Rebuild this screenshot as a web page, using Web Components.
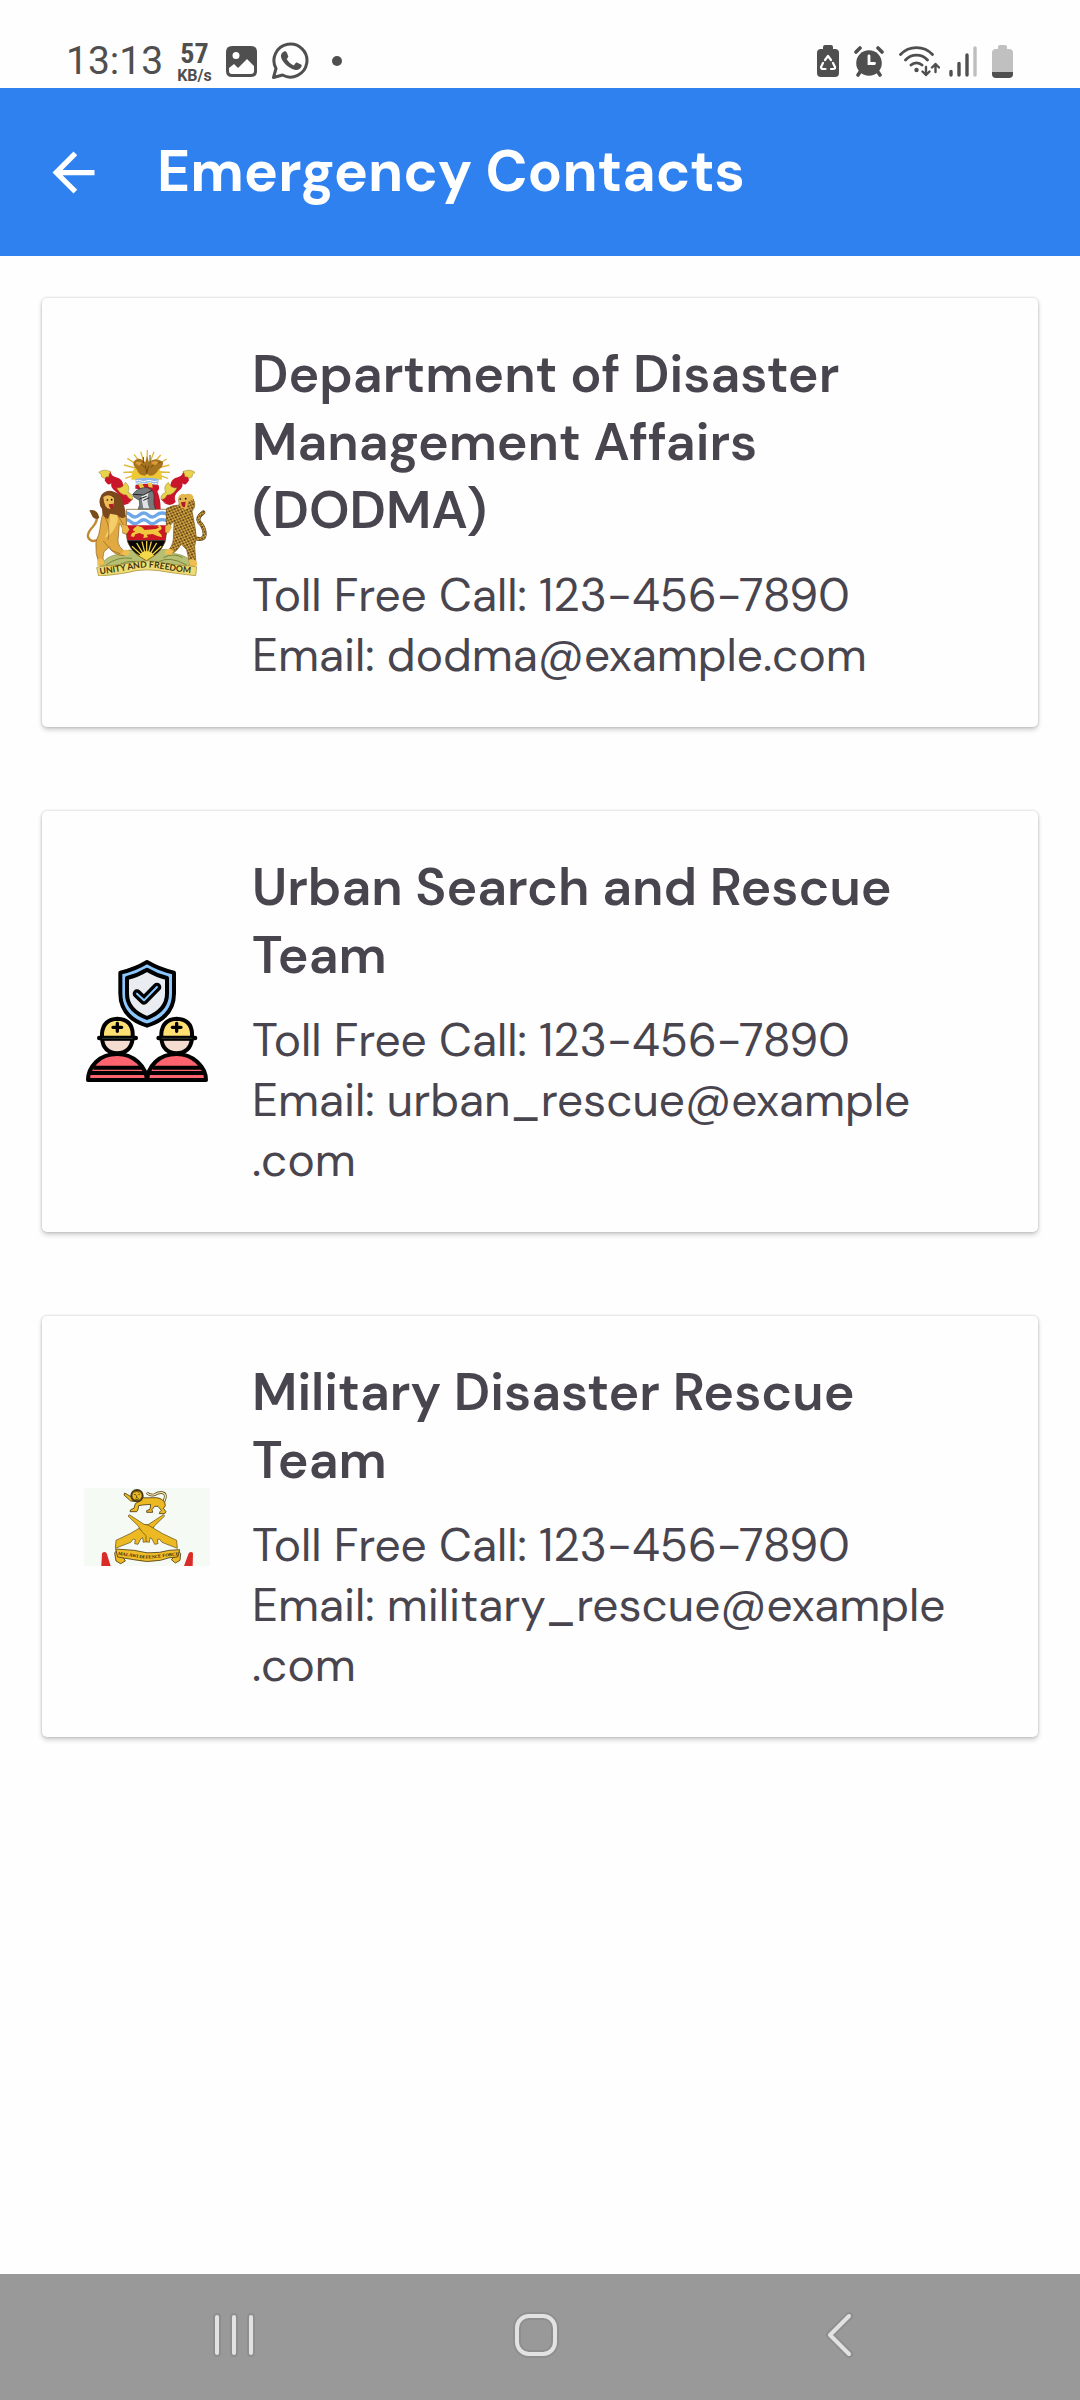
<!DOCTYPE html>
<html lang="en">
<head>
<meta charset="utf-8">
<meta name="viewport" content="width=device-width, initial-scale=1">
<title>Emergency Contacts</title>
<style>
  body {
    margin: 0;
    background: #fefefe;
    color: #49454f;
    font-family: "DM Sans", Inter, "Open Sans", sans-serif;
  }
</style>
</head>
<body>

<contacts-screen>
  <status-bar slot="status" time="13:13" rate="57" unit="KB/s"></status-bar>
  <app-header slot="header">Emergency Contacts</app-header>

  <contact-card>
    <coat-of-arms slot="emblem"></coat-of-arms>
    <span slot="name">Department of Disaster Management Affairs (DODMA)</span>
    <span slot="phone">Toll Free Call: 123-456-7890</span>
    <span slot="email">Email: dodma@example.com</span>
  </contact-card>

  <contact-card>
    <rescue-team slot="emblem"></rescue-team>
    <span slot="name">Urban Search and Rescue Team</span>
    <span slot="phone">Toll Free Call: 123-456-7890</span>
    <span slot="email">Email: urban_rescue@example<wbr>.com</span>
  </contact-card>

  <contact-card>
    <defence-badge slot="emblem"></defence-badge>
    <span slot="name">Military Disaster Rescue Team</span>
    <span slot="phone">Toll Free Call: 123-456-7890</span>
    <span slot="email">Email: military_rescue@example<wbr>.com</span>
  </contact-card>

  <system-nav slot="nav"></system-nav>
</contacts-screen>

<template id="contacts-screen">
  <style>
    :host { display: flex; flex-direction: column; min-height: 100vh; }
    main { flex: 1; display: flex; flex-direction: column; gap: 84px; padding: 42px; }
  </style>
  <slot name="status"></slot>
  <slot name="header"></slot>
  <main><slot></slot></main>
  <slot name="nav"></slot>
</template>

<template id="status-bar">
  <style>
    :host {
      display: flex; justify-content: space-between; align-items: center;
      height: 54px; padding: 34px 67px 0 66px; color: #4f4f4f;
      font-family: Roboto, sans-serif;
    }
    .group { display: flex; align-items: center; }
    .left { gap: 14px; }
    .right { gap: 15px; }
    svg { display: block; }
    .signal { margin-left: -6px; }
    .time { font-size: 39px; line-height: 54px; }
    .net { display: flex; flex-direction: column; align-items: center; padding-top: 2px; font-weight: 700; }
    .rate { font: 700 28px/28px "Liberation Sans Narrow", "Roboto Condensed", sans-serif; }
    .unit { font-size: 16px; line-height: 16px; }
    .dot { width: 10px; height: 10px; border-radius: 50%; background: currentColor; margin-left: 9px; }
  </style>
  <div class="group left">
    <span class="time"></span>
    <span class="net"><span class="rate"></span><span class="unit"></span></span>
    <svg width="31" height="31" viewBox="0 0 31 31"><path fill="currentColor" fill-rule="evenodd" d="M6 0h19q6 0 6 6v19q0 6-6 6H6q-6 0-6-6V6q0-6 6-6zM10 6a3.500 3.500 0 1 0 0 7a3.500 3.500 0 0 0 0-7zM3 22v3q0 3 3 3h19q3 0 3-3v-5l-7-7l-9 9l-4-4z"/></svg>
    <svg width="38" height="38" viewBox="0 0 38 38"><path fill="none" stroke="currentColor" stroke-width="3" stroke-linejoin="round" d="M2.500 35.500L5 26.500A16.500 16.500 0 1 1 11.500 33z"/><path fill="currentColor" d="M13 9.500c1-.6 2-.4 2.500.6l1.700 4c.3.8-.2 1.500-1.500 3c1.600 3 4 5 7 6.300l2-2.300c.5-.6 1-.6 1.700-.3l3.600 1.800c.8.4.8 1.200.4 2.200c-1 2.400-3.400 3.500-6 3.100c-6-1-13-7-14.400-12.800c-.5-2.300.8-4.600 3-5.600z"/></svg>
    <span class="dot"></span>
  </div>
  <div class="group right">
    <svg width="22" height="33" viewBox="0 0 22 33"><path fill="currentColor" d="M6 4V2q0-2 2-2h6q2 0 2 2v2h2q4 0 4 4v20q0 4-4 4H4q-4 0-4-4V8q0-4 4-4z"/><g fill="none" stroke="#fff" stroke-width="2.200" stroke-linecap="round" stroke-linejoin="round"><path d="M8 15l3-4 3 4M16 18l2 4q.5 2-2 2h-2M8.500 24H6q-2 0-2-2l2-4"/></g></svg>
    <svg width="30" height="31" viewBox="0 0 30 31"><circle cx="15" cy="17" r="12.800" fill="currentColor"/><path fill="none" stroke="currentColor" stroke-width="3.600" stroke-linecap="round" d="M2 6l4-4M28 6l-4-4M6 26l-2 3M24 26l2 3"/><path fill="none" stroke="#fff" stroke-width="2.800" stroke-linecap="round" d="M15 10v7.500h5.500"/></svg>
    <svg width="41" height="32" viewBox="0 0 41 32"><g fill="none" stroke="currentColor" stroke-width="2.800" stroke-linecap="round"><path d="M1.500 9.500a22 22 0 0 1 32 0M6.500 15a15 15 0 0 1 22 0M12 20a8 8 0 0 1 11 0"/><path stroke-width="2.400" stroke-linejoin="round" d="M27 22v8m-3.500-3.500L27 30l3.500-3.500M36.500 27v-8m-3.500 3.500l3.500-3.500 3.500 3.500"/></g><circle cx="17.500" cy="25" r="2.200" fill="currentColor"/></svg>
    <svg class="signal" width="28" height="31" viewBox="0 0 28 31" stroke="currentColor" stroke-width="3.400" stroke-linecap="round"><path d="M2 25.500v3.500M10 17.500V29M18 9v20"/><path stroke="#bebebe" d="M26 2v27"/></svg>
    <svg width="21" height="33" viewBox="0 0 21 33"><path fill="#c0c0c0" d="M6 4V2q0-2 2-2h5q2 0 2 2v2h2q4 0 4 4v19H0V8q0-4 4-4z"/><path fill="currentColor" d="M0 27h21v2q0 4-4 4H4q-4 0-4-4z"/></svg>
  </div>
</template>

<template id="app-header">
  <style>
    :host { display: flex; align-items: center; gap: 52px; height: 168px; padding: 0 42px; background: #3081f0; color: #fff; }
    button { display: block; border: 0; padding: 0; background: none; color: inherit; }
    svg { display: block; }
    h1 { margin: 0; font-size: 57px; line-height: 76px; font-weight: 700; }
  </style>
  <button type="button" aria-label="Back">
    <svg width="63" height="63" viewBox="0 0 24 24" fill="currentColor"><path d="M20 11H7.830l5.590-5.590L12 4l-8 8 8 8 1.410-1.410L7.830 13H20v-2z"/></svg>
  </button>
  <h1><slot></slot></h1>
</template>

<template id="contact-card">
  <style>
    :host {
      display: flex; align-items: center; gap: 42px;
      padding: 42px 63px 42px 42px; border-radius: 5px; background: #fefefe;
      box-shadow: 0 3px 5px rgba(0,0,0,.18), 0 0 3px rgba(0,0,0,.2);
    }
    .emblem { flex: none; width: 126px; }
    .text { flex: 1; min-width: 0; display: flex; flex-direction: column; gap: 21px; }
    h2 { margin: 0; font-size: 52px; line-height: 68px; font-weight: 600; }
    p { margin: 0; font-size: 46px; line-height: 60px; }
  </style>
  <div class="emblem"><slot name="emblem"></slot></div>
  <div class="text">
    <h2><slot name="name"></slot></h2>
    <div>
      <p><slot name="phone"></slot></p>
      <p><slot name="email"></slot></p>
    </div>
  </div>
</template>

<template id="system-nav">
  <style>
    :host { display: flex; justify-content: center; gap: 218px; padding: 21px 0; background: #999; }
    button { display: block; border: 0; padding: 0; background: none; }
    svg { display: block; }
    .edge { stroke: #8e8e8e; stroke-width: 8; }
    .line { stroke: #e2e2e2; stroke-width: 4; }
  </style>
  <button type="button" aria-label="Recent apps">
    <svg width="84" height="84" viewBox="0 0 84 84" fill="none" stroke-linecap="round"><path class="edge" d="M21 22v36M38 22v36M55 22v36"/><path class="line" d="M21 22v36M38 22v36M55 22v36"/></svg>
  </button>
  <button type="button" aria-label="Home">
    <svg width="84" height="84" viewBox="0 0 84 84" fill="none"><rect class="edge" x="19" y="21" width="38" height="38" rx="12"/><rect class="line" x="19" y="21" width="38" height="38" rx="12"/></svg>
  </button>
  <button type="button" aria-label="Back">
    <svg width="84" height="84" viewBox="0 0 84 84" fill="none" stroke-linecap="round" stroke-linejoin="round"><path class="edge" d="M49 21L30 40l19 19"/><path class="line" d="M49 21L30 40l19 19"/></svg>
  </button>
</template>

<template id="coat-of-arms">
  <style>:host, svg { display: block; } text { font: 700 26px Lato, sans-serif; fill: #3b340c; }</style>
  <svg width="126" height="126" viewBox="42 57 378 378" role="img" aria-label="Coat of arms">
    <defs>
      <pattern id="spots" width="12" height="11" patternUnits="userSpaceOnUse" patternTransform="rotate(20)"><rect width="12" height="11" fill="#d6a440"/><circle cx="3" cy="3" r="2.900" fill="#3f2b0c"/><circle cx="9" cy="8" r="2.500" fill="#4a3310"/></pattern>
      <clipPath id="field"><path d="M169 235h120v75q0 48-60 79q-60-31-60-79z"/></clipPath>
      <path id="motto" d="M90 430Q158 421 198 412Q232 407 266 412Q312 421 380 429"/>
      <g id="mantle">
        <path fill="#c9162b" d="M104 148q2-18 17-27q4 16 17 18q20 4 22 24q-4 16 8 24q14 6 20 18q-12 16-33 10q12 4 28-2q-22 18-39 0q8-20-8-32q-16-12-12-24q-10 10-20-9z"/>
        <path fill="#ead34c" stroke="#917926" stroke-width="1.500" d="M86 124q16-12 36-2q-6 6-6 16q-10-2-12 4q-12-2-10-12zM140 170q18 4 26-16q16 12 8 30q16 6 14 22q-12 0-18-14q-20 0-30-22z"/>
      </g>
    </defs>
    <!-- rising sun and fish eagle -->
    <g stroke="#e0b93a" stroke-width="4"><path d="M230 120L162 102M230 120L172 82M230 120L192 70M230 120L212 62M230 120L232 57M230 120L252 62M230 120L272 72M230 120L290 84M230 120L298 102M230 120L160 124M230 120L300 124M230 120L166 142M230 120L294 142"/></g>
    <path fill="#efc935" d="M184 146q-2-46 46-48q48 2 46 48z"/>
    <path fill="#a8741f" d="M190 94q10-16 26-8l10 8 5-20 6 20q18-18 42-2q2 16-14 24q-8 18-26 18l-8-6-6 6q-20-2-24-18q-12-10-11-22z"/>
    <path fill="none" stroke="#6f4b12" stroke-width="3" d="M196 96q16-2 28 14M272 94q-18 0-30 16M220 78v18M240 72v24M226 102l4 26 6-24"/>
    <path fill="#dd9a3a" d="M194 96q10-8 22 0l-8 8zM242 95q14-8 24 0l-12 8z"/>
    <path fill="#8db7e8" d="M196 144q32-8 70 0l-2 18q-32-6-66 0z"/><path fill="none" stroke="#fff" stroke-width="3" d="M197 150q8-4 16 0t16 0 16 0 18 0M198 157q8-4 16 0t16 0 16 0 16 0"/>
    <use href="#mantle"/>
    <g transform="translate(461) scale(-1 1)"><use href="#mantle"/></g>
    <!-- helmet -->
    <path fill="#c9162b" d="M196 163q32-10 70 0q4 12-4 18q10 24 10 54h-26l-10-58-40-4z"/>
    <path fill="#e9cb45" d="M204 160l12-3 8 14-12 2zM232 155l14 1 2 14-12-2z"/>
    <path fill="#777a7d" stroke="#303235" stroke-width="2" d="M188 190q16-22 44-20q24 6 20 36q-2 18 6 30h-54q8-16 4-28l-16-10z"/>
    <path fill="#e0e2e3" d="M214 196l22-12q-8 26 2 48h-18q-4-18-6-36z"/><path fill="none" stroke="#222" stroke-width="3" d="M190 190l30 2 26-14M208 204l22-8M220 208l18-8"/>
    <!-- base compartment -->
    <path fill="#b7bf72" stroke="#8a9450" stroke-width="2" d="M90 406q20-34 58-36q30-22 56-6l50 0q34-20 62 4q44 6 58 40z"/>
    <path fill="none" stroke="#78863e" stroke-width="3" d="M108 402q34-26 78-20M142 404q28-16 56-12M266 392q34-18 84 10M280 380q30-16 58 0"/>
    <!-- lion -->
    <path fill="none" stroke="#c08a35" stroke-width="7" stroke-linecap="round" d="M92 322q-28 18-38-4q-2-14 14-30q18-20 10-36"/><path fill="#7b4a19" d="M58 238q24-6 30 22q-10 8-20-2z"/>
    <path fill="#e0a942" stroke="#8c5d18" stroke-width="2" d="M108 226q30-10 50 18q20 20 20 38l-8 28-12-4q2-18-10-28l-4 50q-2 18 26 38l-10 8q-30-2-42-26l-16 14q-6 18 0 36l-14 4q-14-36-10-72q10-18 12-38q4-40 18-66z"/>
    <path fill="#f4cf69" d="M120 240q20 2 24 24q-10 44-40 58q18-38 16-82z"/><path fill="none" stroke="#94611b" stroke-width="2" d="M106 262q16 24 8 64M144 254l18 30M100 330l24 28 26 10"/>
    <path fill="#7b481c" d="M94 192q16-18 38-10q24 6 26 32q10 20 8 44q-14 8-24-6l-22-4-6 16q-18-4-18-30q-14-18-2-42z"/>
    <path fill="#efbd56" d="M100 198q18-12 32 4q2 24-12 32q-18-2-20-36z"/><path fill="#b01c20" d="M116 220l14-2-2 14q-8 6-12-12z"/><circle cx="112" cy="207" r="2.500"/><circle cx="125" cy="206" r="2.500"/>
    <!-- leopard -->
    <path fill="none" stroke="#49340f" stroke-width="12" stroke-linecap="round" d="M370 320q34 12 34-12q-2-22-16-34q-10-14 12-30"/><path fill="none" stroke="url(#spots)" stroke-width="9" stroke-linecap="round" d="M370 320q34 12 34-12q-2-22-16-34q-10-14 12-30"/>
    <path fill="url(#spots)" stroke="#785516" stroke-width="2" d="M326 204q20-22 44 0q10 22-4 36l10 54q6 26-2 52l4 52-18 4-10-46-16-16q-14 24-34 30l-10-8q18-14 20-38l2-54-12 14-12 28-10-4q-2-20 8-34l4-42q18-10 38-10z"/>
    <path fill="#e4b64d" d="M325 200q4-14 20-10q24-6 26 12q-8 10-16 8l-5 24q-22 4-25-34z"/><path fill="#b01c20" d="M333 214l14-2-2 16q-10 4-12-14z"/><circle cx="331" cy="204" r="2.500"/><circle cx="347" cy="203" r="2.500"/>
    <!-- shield -->
    <g clip-path="url(#field)"><path fill="#fff" d="M160 230h140v60H160z"/><path fill="none" stroke="#6fa8e8" stroke-width="10" d="M156 252q14-12 26 0t26 0 26 0 26 0 36 0M156 272q14-12 26 0t26 0 26 0 26 0 36 0"/><path fill="#cb1822" d="M160 283h140v45H160z"/><path fill="#090806" d="M160 328h140v70H160z"/>
      <path stroke="#f0cf42" stroke-width="4" d="M230 386L186 346M230 386L200 336M230 386L216 332M230 386V330M230 386L244 332M230 386L260 336M230 386L274 346M230 386L180 360M230 386L280 360"/><path fill="#f5d849" d="M204 390q2-28 26-30q24 2 26 30z"/></g>
    <path fill="#f0c83e" d="M192 292l10-8 14 5 8 8 34-3 10-5-6-3 6-4q16 12-4 19l10 10 2 8-14-4-14-6-18 2 4 8-14 2 2-10-14-5-12 4-4 8-10-2 4-10 10-4-8-4z"/>
    <path fill="none" stroke="#6c4d16" stroke-width="2" d="M169 235h120v75q0 48-60 79q-60-31-60-79z"/>
    <path fill="#e8b84b" d="M156 282l16 2 6 12-8 12-12-4zM286 286l12-6 8 8-10 18-10-2z"/>
    <!-- feet and motto ribbon -->
    <path fill="#efbd50" d="M82 386q12-8 20 4l2 10-22 6zM160 358q16-6 20 8l-8 8-18-4zM286 358q12-10 24 2l-4 12-22-2zM356 388q16-8 24 4l2 12-22 2z"/>
    <path fill="#efdc75" stroke="#9d8428" stroke-width="2" d="M80 410l12-4Q158 402 198 392q32-5 68 0q42 10 106 14l8 2-3 26Q312 427 266 419q-34-5-68 0q-42 11-112 16z"/>
    <text><textPath href="#motto">UNITY AND FREEDOM</textPath></text>
  </svg>
</template>

<template id="rescue-team">
  <style>:host, svg { display: block; }</style>
  <svg width="126" height="126" viewBox="42 57 378 378" role="img" aria-label="Rescue team" stroke="#000" stroke-width="12" stroke-linejoin="round" stroke-linecap="round">
    <path fill="#8cc7ff" d="M231 66Q268 88 312 98V160q0 72-81 97q-80-25-80-97V98q44-10 80-32z"/>
    <path fill="#e9edf2" d="M231 89q28 17 60 25v47q0 49-60 73q-60-24-60-73v-47q32-8 60-25z"/>
    <path fill="none" stroke-width="26" d="M201 161l21 20 39-40"/><path fill="none" stroke="#8cc7ff" stroke-width="6" d="M201 161l21 20 39-40"/>
    <defs><g id="rescuer">
      <path fill="#f4ddd0" d="M96 296q4 42 45 44q42-2 47-44z"/>
      <path fill="#ffe073" d="M96 294v-14q4-42 46-44q44 2 46 44v14z"/>
      <path fill="none" stroke-width="10" d="M142 250v24M129 262h26"/><path stroke-width="14" d="M88 294h109"/><path stroke="#26312d" stroke-width="4" d="M98 295h90"/>
      <path fill="#ff646e" d="M54 420q0-30 24-54q24-24 64-24q36 0 62 24q26 24 26 54z"/>
      <path stroke-width="12" stroke-linecap="butt" d="M70 383h146M58 399h171"/>
    </g></defs>
    <use href="#rescuer"/><use href="#rescuer" x="178"/>
  </svg>
</template>

<template id="defence-badge">
  <style>:host, svg { display: block; } text { font: 700 14px "Liberation Serif", serif; fill: #2b220c; }</style>
  <svg width="126" height="78" viewBox="42 81 378 234" role="img" aria-label="Defence force badge">
    <defs>
      <g id="rifle" stroke="#5b4612" stroke-width="2" stroke-linejoin="round">
        <path fill="#edb923" d="M284 165l-4-4-44 29-12 2-44 26-42 20-2 24 46-18 8-10 6 2-2 12 10 2 8-16 6-4 2 14 10-2 0-18 14-14 10-16z"/>
      </g>
    </defs>
    <path fill="#f5faf5" d="M42 81h378v234H42z"/>
    <path fill="#d92b27" d="M94 315l2-38q8-8 14 0l12 38zM342 315l14-38q8-8 13 0l-1 38z"/>
    <g stroke="#4b3b13" stroke-width="2.500" stroke-linejoin="round">
      <path fill="none" stroke-width="8" d="M280 124q14-26-4-29q-14-1-22 6q-12 4-24-6"/><path fill="none" stroke="#f5e6ae" stroke-width="4" d="M280 124q14-26-4-29q-14-1-22 6q-12 4-24-6"/>
      <path fill="#edb923" d="M206 122L182 120 162 102 164 96 188 110 204 108q20 4 44 2q26-2 36 14q6 12-4 18l8 10-4 6h-16l2-6 4-4-10-12h-10l-8 10 2 8h-18v-5l10-4 2-15-24 2-12 2-2 12-4 6h-20l2-6 10-4 4-14z"/>
      <circle cx="201" cy="104" r="17" fill="#edb923" stroke-width="6"/><path fill="none" d="M192 100l6 2M205 101l5-2M200 103l-1 7h4M195 114q6 4 12-1M193 94l7-3 8 3"/>
    </g>
    <use href="#rifle"/>
    <g transform="translate(458) scale(-1 1)"><use href="#rifle"/></g>
    <g stroke="#4b3b13" stroke-width="2.500" stroke-linejoin="round">
      <path fill="#edb923" d="M140 268l-6 8 4 24 14 8 14-8-8-14zM324 268l8 10-2 20-14 8-12-10 12-12z"/>
      <path fill="#f0bd29" d="M137 264l56 4q38 12 76 6q26-8 60-8l-6 22q-26 0-52 10q-40 8-80-2l-48-8z"/>
    </g>
    <path id="band" fill="none" d="M144 282L192 288q44 9 80 1L324 283"/>
    <text><textPath href="#band">MALAWI DEFENCE FORCE</textPath></text>
  </svg>
</template>

<script>
  const stamp = (host) => {
    const root = host.attachShadow({ mode: 'open' });
    root.append(document.getElementById(host.localName).content.cloneNode(true));
    return root;
  };

  for (const name of ['contacts-screen', 'app-header', 'contact-card', 'system-nav', 'coat-of-arms', 'rescue-team', 'defence-badge']) {
    customElements.define(name, class extends HTMLElement {
      constructor() {
        super();
        stamp(this);
      }
    });
  }

  customElements.define('status-bar', class extends HTMLElement {
    constructor() {
      super();
      const root = stamp(this);
      for (const key of ['time', 'rate', 'unit']) {
        root.querySelector('.' + key).textContent = this.getAttribute(key);
      }
    }
  });
</script>
</body>
</html>
